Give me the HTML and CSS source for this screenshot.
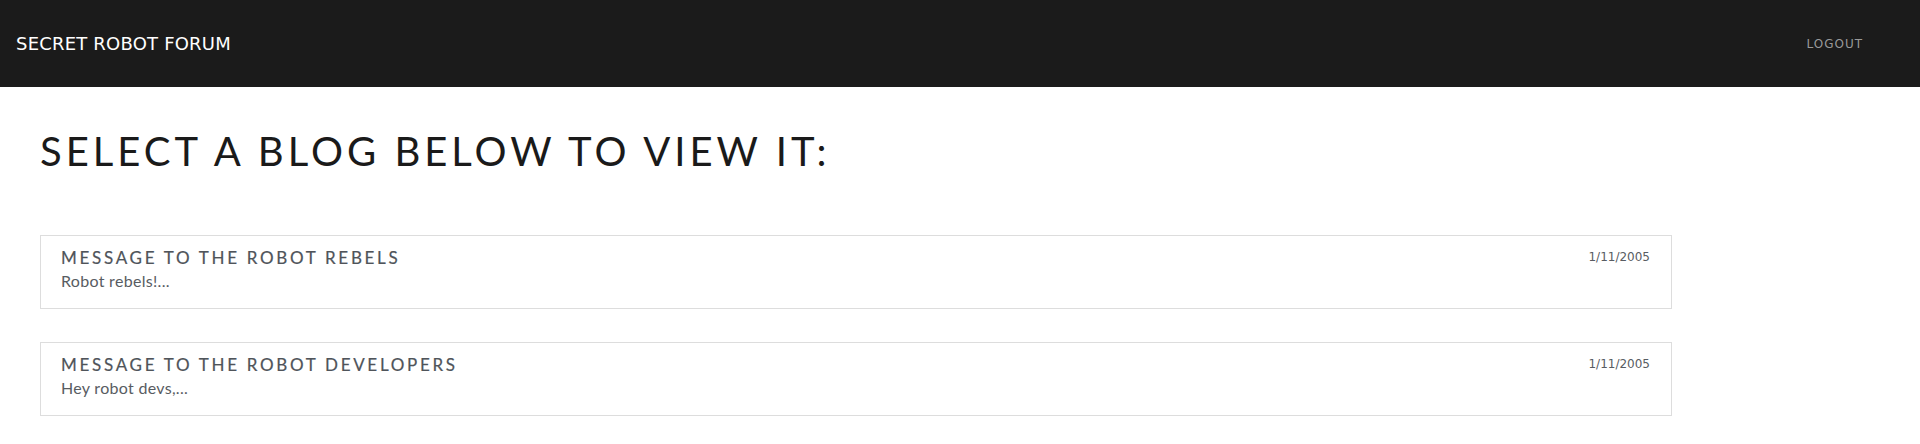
FILE: index.html
```html
<!DOCTYPE html>
<html>
<head>
<meta charset="utf-8">
<link rel="stylesheet" href="styles.css">
</head>
<body>
<header class="navbar">
  <a class="brand" href="#">SECRET ROBOT FORUM</a>
  <a class="logout" href="#">LOGOUT</a>
</header>
<main class="content">
  <h1 class="page-title">SELECT A BLOG BELOW TO VIEW IT:</h1>
  <div class="blog-list">
    <a class="blog-card" href="#">
      <div class="card-top">
        <h2 class="card-title">MESSAGE TO THE ROBOT REBELS</h2>
        <span class="card-date">1/11/2005</span>
      </div>
      <p class="card-excerpt">Robot rebels!...</p>
    </a>
    <a class="blog-card" href="#">
      <div class="card-top">
        <h2 class="card-title">MESSAGE TO THE ROBOT DEVELOPERS</h2>
        <span class="card-date">1/11/2005</span>
      </div>
      <p class="card-excerpt">Hey robot devs,...</p>
    </a>
  </div>
</main>
</body>
</html>
```

FILE: styles.css
```css
* { box-sizing: border-box; }
body {
  margin: 0;
  background: #fff;
  font-family: "DejaVu Sans", Verdana, sans-serif;
}
a { text-decoration: none; }
.navbar {
  height: 87px;
  background: #1b1b1b;
  display: flex;
  align-items: center;
  justify-content: space-between;
  padding: 0 57px 0 16px;
}
.brand {
  color: #fff;
  font-size: 18px;
  letter-spacing: 0.2px;
}
.logout {
  color: #999;
  font-size: 12px;
  letter-spacing: 1px;
}
.content {
  padding: 0 40px;
}
.page-title {
  margin: 0;
  padding-top: 40px;
  font-family: Lato, "Open Sans", sans-serif;
  font-weight: 400;
  font-size: 40px;
  letter-spacing: 4px;
  color: #1a1a1a;
  line-height: 1.2;
}
.blog-list {
  margin-top: 60px;
  display: flex;
  flex-direction: column;
  gap: 33px;
  width: 1632px;
}
.blog-card {
  display: block;
  border: 1px solid #ddd;
  padding: 11px 21px 0 20px;
  height: 74px;
}
.card-top {
  display: flex;
  justify-content: space-between;
  align-items: flex-start;
}
.card-title {
  margin: 0;
  font-family: Lato, "Open Sans", sans-serif;
  font-weight: 400;
  font-size: 17px;
  letter-spacing: 2.7px;
  color: #4f545a;
  line-height: 22px;
  -webkit-text-stroke: 0.2px #4f545a;
}
.card-date {
  font-size: 12px;
  color: #585c62;
  line-height: 20px;
}
.card-excerpt {
  margin: 3px 0 0;
  font-family: Lato, "Open Sans", sans-serif;
  font-size: 16px;
  letter-spacing: 0.3px;
  color: #585c62;
  line-height: 18px;
}
```
